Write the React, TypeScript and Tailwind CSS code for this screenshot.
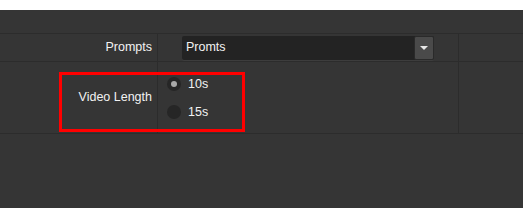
import { useState } from 'react'

const font = { fontFamily: '"Liberation Sans", Arial, sans-serif' }

function Radio({ checked, label, onClick }: { checked: boolean; label: string; onClick: () => void }) {
  return (
    <button onClick={onClick} className="flex items-center gap-[7px] h-[28px] text-[12.5px] text-[#f2f2f2]">
      <span className="flex items-center justify-center w-[14px] h-[14px] rounded-full bg-[#262626]">
        {checked && <span className="w-[6px] h-[6px] rounded-full bg-[#a8a8a8]" />}
      </span>
      <span>{label}</span>
    </button>
  )
}

export default function App() {
  const [length, setLength] = useState('10s')

  return (
    <div className="w-[523px] h-[208px] bg-white overflow-hidden" style={font}>
      <div className="h-[10px] bg-white" />
      <div className="h-[198px] bg-[#353535]">
        <div className="h-[24px] border-b border-[#2c2c2c]" />

        {/* Prompts row */}
        <div className="flex h-[28px] border-b border-[#2c2c2c]">
          <div className="w-[157px] flex items-center justify-end pr-[5px] text-[12.5px] text-[#f2f2f2]">
            Prompts
          </div>
          <div className="w-[301px] border-l border-[#2c2c2c] flex items-center pl-[24px]">
            <div className="flex w-[252px] h-[24px] rounded-[2px] bg-[#232323] shadow-[0_1px_0_#3d3d3d]">
              <div className="flex-1 flex items-center pl-[4px] text-[12.5px] text-[#f2f2f2]">Promts</div>
              <div className="w-[20px] h-[24px] rounded-[2px] border border-[#2a2a2a] bg-[#4a4a4a] flex items-center justify-center">
                <svg width="8" height="4" viewBox="0 0 8 4">
                  <path d="M0 0 H8 L4 4 Z" fill="#e6e6e6" />
                </svg>
              </div>
            </div>
          </div>
          <div className="flex-1 border-l border-[#2c2c2c]" />
        </div>

        {/* Video length row */}
        <div className="flex h-[72px] border-b border-[#2c2c2c]">
          <div className="w-[157px] flex items-center justify-end pr-[5px] text-[12.5px] text-[#f2f2f2]">
            Video Length
          </div>
          <div className="w-[301px] border-l border-[#2c2c2c] flex flex-col pl-[9px] pt-[8px]">
            <Radio checked={length === '10s'} label="10s" onClick={() => setLength('10s')} />
            <Radio checked={length === '15s'} label="15s" onClick={() => setLength('15s')} />
          </div>
          <div className="flex-1 border-l border-[#2c2c2c]" />
        </div>
      </div>

      {/* highlight box */}
      <div className="absolute left-[59px] top-[72px] w-[186px] h-[60px] border-[3px] border-[#ff0000] pointer-events-none" />
    </div>
  )
}
